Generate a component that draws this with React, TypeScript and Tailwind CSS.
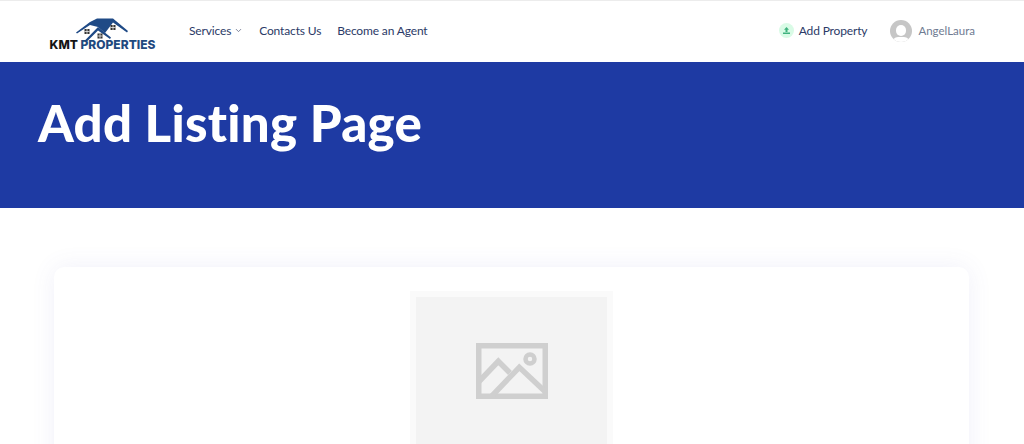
import { ChevronDown } from "lucide-react"

const NavLink = ({ label }: { label: string }) => (
  <a className="text-[12px] leading-5 tracking-[-0.15px] text-[#2b3a67]">{label}</a>
)

const Logo = () => (
  <div className="mt-[17px] flex w-[107px] flex-col items-center self-start">
    <svg width="52" height="30" viewBox="0 0 52 30" className="-mb-[10px] -ml-[1px]">
      <path d="M0 14.5 L14 4 L21 0.5 L37 0.5 L52 13 L51 14.5 L37 4.5 L29 15 L22 9 L14 7 L1 15.5 Z" fill="#1f4a86" />
      <path d="M8.4 23 L22 9 L35 19.5 L34 21 L22 12.5 L10.4 24 Z" fill="#1f4a86" />
      <rect x="8.5" y="11" width="5" height="5" fill="#333" />
      <rect x="21.5" y="15.5" width="5" height="5" fill="#333" />
      <rect x="34.5" y="7" width="5" height="5" fill="#333" />
      <path d="M11 11 V16 M8.5 13.5 H13.5 M24 15.5 V20.5 M21.5 18 H26.5 M37 7 V12 M34.5 9.5 H39.5" stroke="#fff" strokeWidth="0.7" />
    </svg>
    <div className="whitespace-nowrap font-['Inter',sans-serif] text-[12px] font-extrabold leading-[14px]">
      <span className="text-[#151515]">KMT </span>
      <span className="text-[#1f4a7f]">PROPERTIES</span>
    </div>
  </div>
)

const ImagePlaceholder = () => (
  <svg width="72" height="56" viewBox="0 0 72 56" fill="none" stroke="#cfcfcf" strokeWidth="5.5">
    <rect x="2.75" y="2.75" width="66.5" height="50.5" />
    <path d="M3 38.5 L22.3 18.3 L34 30" />
    <path d="M14 55 L43.3 24.3 L69 48.5" />
    <circle cx="54" cy="16" r="4.5" strokeWidth="4.5" />
  </svg>
)

export default function App() {
  return (
    <div className="h-screen overflow-hidden bg-white font-['Lato',sans-serif]">
      <header className="flex h-[62px] items-center border-t border-[#ececec] pb-[2px] pl-[49px] pr-[49px]">
        <Logo />
        <nav className="ml-[33px] flex items-center gap-[16px]">
          <span className="flex items-center gap-[3px]">
            <NavLink label="Services" />
            <ChevronDown size={9} className="text-[#555f7d]" />
          </span>
          <NavLink label="Contacts Us" />
          <NavLink label="Become an Agent" />
        </nav>
        <div className="ml-auto flex items-center">
          <span className="flex h-[15px] w-[15px] items-center justify-center rounded-full bg-[#d9fbe6]">
            <svg width="9" height="9" viewBox="0 0 9 9" fill="#3fb27f">
              <path d="M4.5 1 L7 3.8 H5.5 V6 H3.5 V3.8 H2 Z" />
              <rect x="1" y="6.5" width="7" height="1.5" />
            </svg>
          </span>
          <span className="ml-[5px] text-[12px] leading-5 tracking-[-0.15px] text-[#2b3a67]">Add Property</span>
          <span className="relative ml-[23px] h-[22px] w-[22px] overflow-hidden rounded-full bg-[#c6c6c6]">
            <span className="absolute left-[6px] top-[5px] h-[11px] w-[10px] rounded-full bg-white" />
            <span className="absolute left-[2px] top-[17px] h-[12px] w-[18px] rounded-full bg-white" />
          </span>
          <span className="ml-[6px] text-[11.5px] leading-5 text-[#6f7b92]">AngelLaura</span>
        </div>
      </header>

      <section className="h-[146px] bg-[#1e3aa3] pl-[38px] pt-[28px]">
        <h1 className="text-[51px] font-black leading-[66px] tracking-[0.25px] text-white">Add Listing Page</h1>
      </section>

      <main className="pl-[54px] pr-[55px] pt-[59px]">
        <div className="flex justify-center rounded-t-[10px] bg-white pt-[24px] shadow-[0_0_24px_rgba(90,90,190,0.09)]">
          <div className="bg-[#fafafa] p-[6px]">
            <div className="flex h-[260px] w-[191px] justify-center bg-[#f3f3f3] pt-[46px]">
              <ImagePlaceholder />
            </div>
          </div>
        </div>
      </main>
    </div>
  )
}
